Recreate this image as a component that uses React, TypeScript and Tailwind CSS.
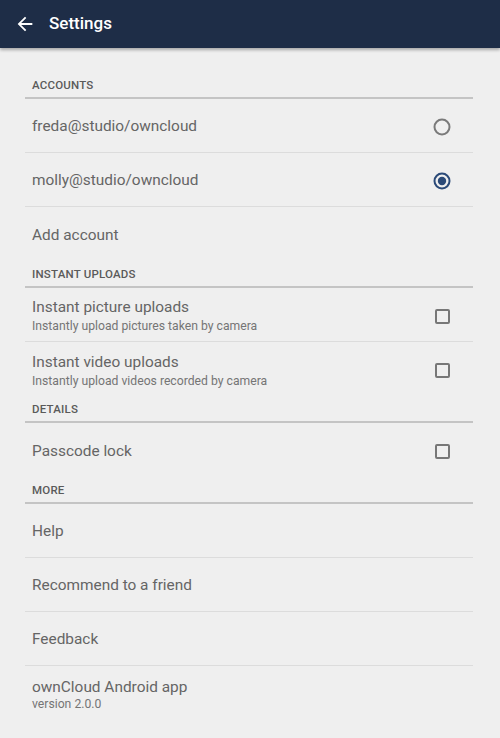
import React from "react";

const font = { fontFamily: "Roboto, 'Noto Sans', sans-serif" };

function Header({ title }: { title: string }) {
  return (
    <div className="h-[27px] flex items-center px-[7px] border-b-2 border-[#c4c4c4] text-[11.5px] font-medium text-[#5a5a5a] tracking-[0.2px] leading-none pt-[3px]">
      {title}
    </div>
  );
}

function Radio({ checked }: { checked?: boolean }) {
  return (
    <svg width="20" height="20" viewBox="0 0 20 20">
      <circle cx="10" cy="10" r="7.5" fill="none" stroke={checked ? "#2b4a78" : "#7a7a7a"} strokeWidth="2" />
      {checked && <circle cx="10" cy="10" r="4.2" fill="#2b4a78" />}
    </svg>
  );
}

function Checkbox() {
  return <div className="w-[15px] h-[15px] border-2 border-[#777] rounded-[2px]" />;
}

function Row({
  title,
  sub,
  right,
  divider = true,
  subGap = "mt-[2px]",
}: {
  title: string;
  sub?: string;
  right?: React.ReactNode;
  divider?: boolean;
  subGap?: string;
}) {
  return (
    <div
      className={`h-[54px] flex items-center pl-[7px] pr-[21px] ${sub ? "pt-[3px]" : "pt-[2px]"} ${
        divider ? "border-b border-[#dcdcdc]" : ""
      }`}
    >
      <div className="flex-1 flex flex-col">
        <div className="text-[15.4px] text-[#656565] leading-[19px]">{title}</div>
        {sub && <div className={`text-[12.2px] text-[#757575] leading-[15px] ${subGap}`}>{sub}</div>}
      </div>
      {right && <div className="w-[20px] flex items-center justify-center">{right}</div>}
    </div>
  );
}

export default function App() {
  return (
    <div className="w-[500px] h-[738px] bg-[#efefef] overflow-hidden" style={font}>
      <div className="h-[48px] bg-[#1e2d47] flex items-center shadow-[0_2px_3px_rgba(0,0,0,0.3)] relative z-10">
        <svg width="22" height="22" viewBox="0 0 24 24" className="ml-[14px]">
          <path d="M20 11H7.83l5.59-5.59L12 4l-8 8 8 8 1.41-1.41L7.83 13H20v-2z" fill="#fff" />
        </svg>
        <span className="ml-[13px] text-[17px] text-white font-medium">Settings</span>
      </div>
      <div className="pl-[25px] pr-[27px] pt-[24px]">
        <Header title="ACCOUNTS" />
        <Row title="freda@studio/owncloud" right={<Radio />} />
        <Row title="molly@studio/owncloud" right={<Radio checked />} />
        <Row title="Add account" divider={false} />
        <Header title="INSTANT UPLOADS" />
        <Row title="Instant picture uploads" sub="Instantly upload pictures taken by camera" right={<Checkbox />} />
        <Row title="Instant video uploads" sub="Instantly upload videos recorded by camera" right={<Checkbox />} divider={false} />
        <Header title="DETAILS" />
        <Row title="Passcode lock" right={<Checkbox />} divider={false} />
        <Header title="MORE" />
        <Row title="Help" />
        <Row title="Recommend to a friend" />
        <Row title="Feedback" />
        <Row title="ownCloud Android app" sub="version 2.0.0" subGap="mt-0" divider={false} />
      </div>
    </div>
  );
}
